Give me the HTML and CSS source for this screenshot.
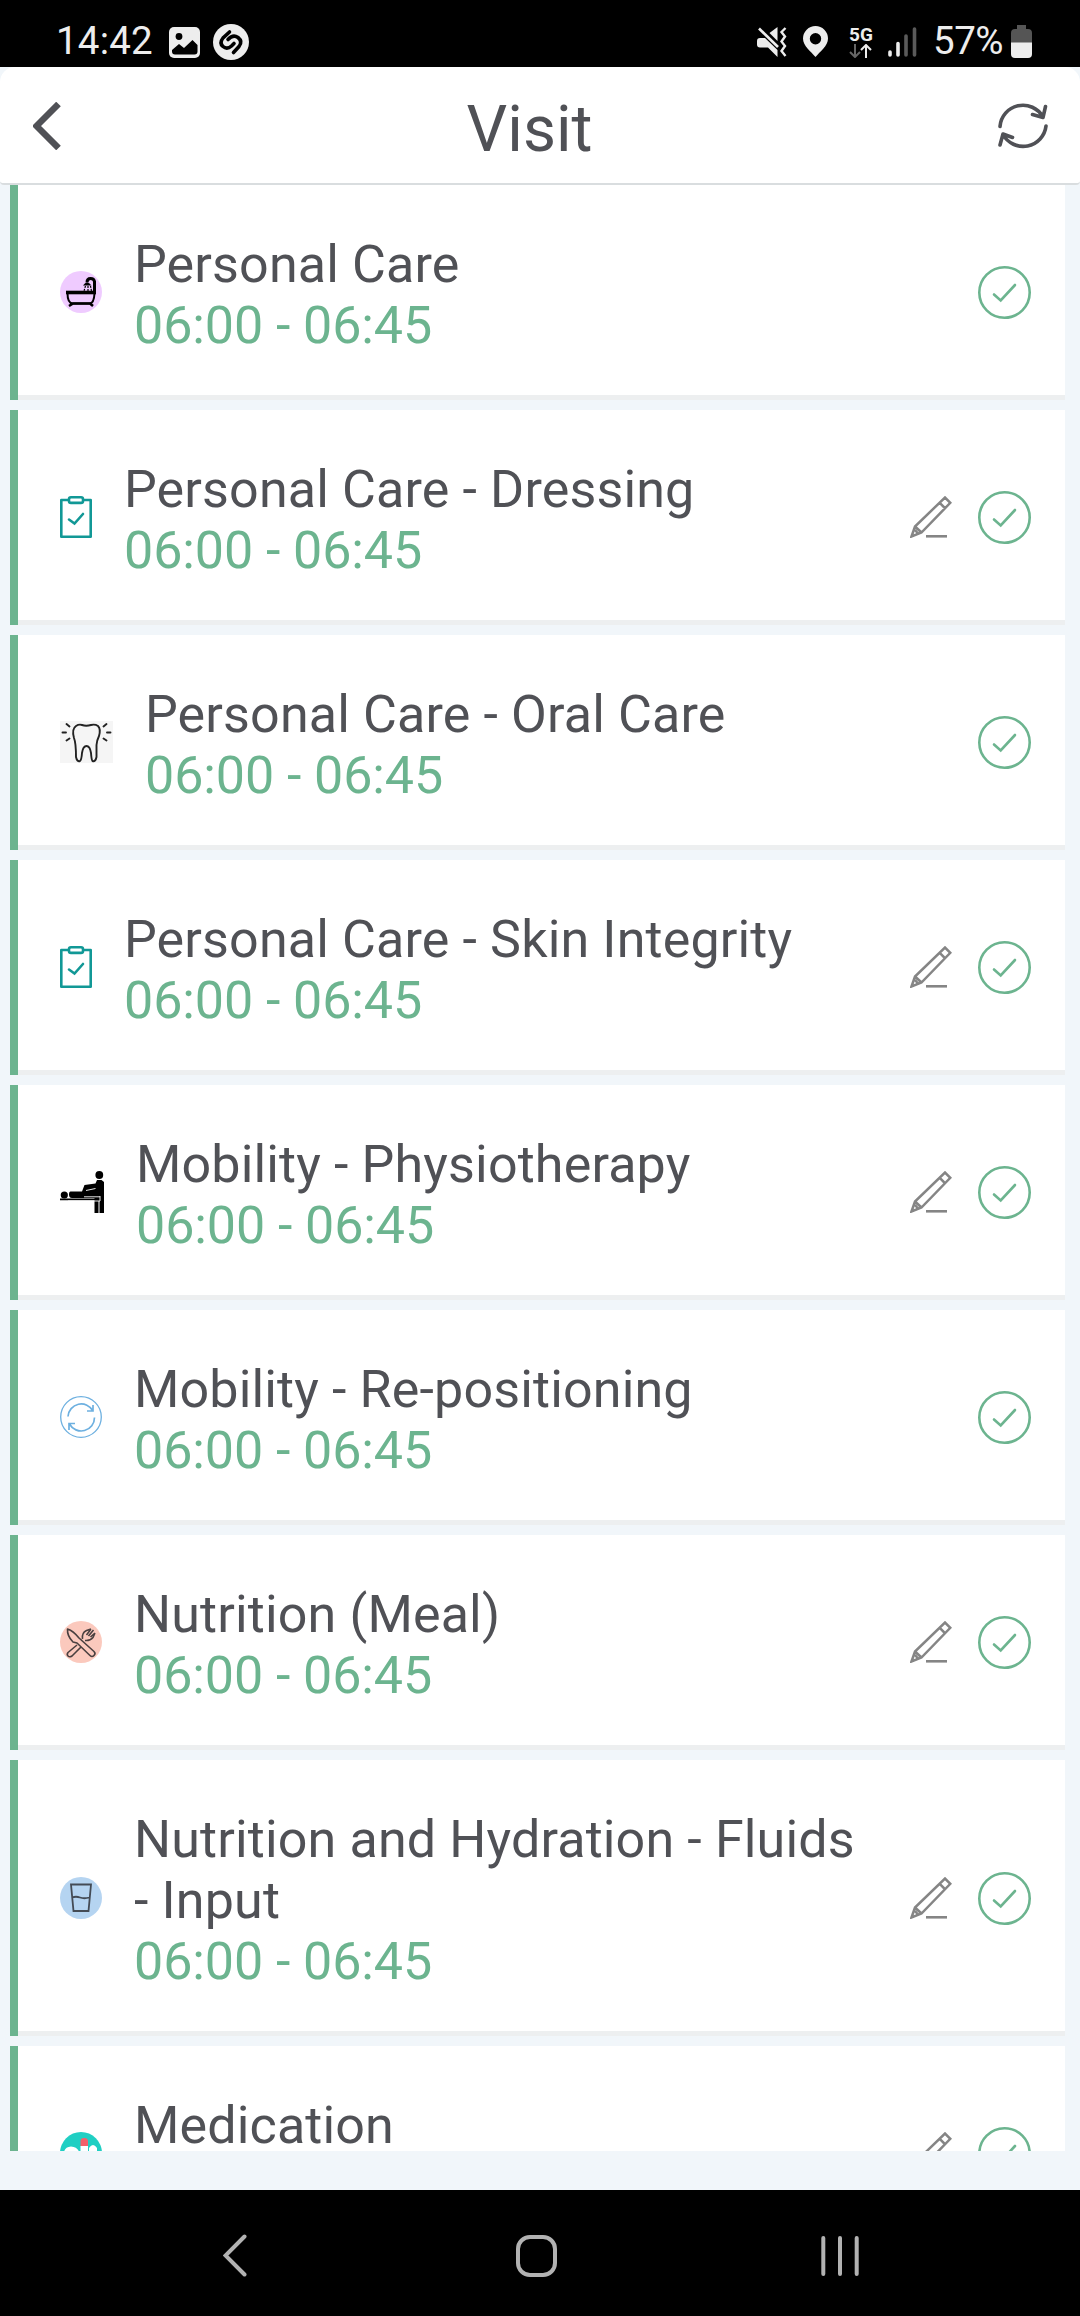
FILE: index.html
```
<!DOCTYPE html>
<html lang="en">
<head>
<meta charset="utf-8">
<title>Visit</title>
<link rel="stylesheet" href="styles.css">
</head>
<body>
<svg class="defs" width="0" height="0">
  <symbol id="done" viewBox="0 0 53 53"><circle cx="26.500" cy="26.500" r="25.200" fill="none" stroke="#6cb48f" stroke-width="2.600"/><path d="M16 28.500l6.700 6L37 19" fill="none" stroke="#6cb48f" stroke-width="2.600" stroke-linecap="round"/></symbol>
  <symbol id="edit" viewBox="0 0 42 42"><g fill="none" stroke="#858585" stroke-width="2.500"><path d="M1.500 40.500L5 30.500 35 1.500l5.300 5.300L11.500 36.500zM5 30.500l6.500 6M29.500 6.700l5.800 5.800M5 34l3 3.500"/><path d="M16 40.300h21" stroke-width="2.600"/></g></symbol>
  <symbol id="clip" viewBox="0 0 32 42"><g fill="none" stroke="#119896" stroke-width="2.600"><path d="M9 4H1.300v36.700h29.400V4H23" stroke-linejoin="round"/><rect x="9" y="1.300" width="14" height="5.600" rx="2"/><path d="M9 23.500l5.500 4L23 18" stroke-linecap="round"/></g></symbol>
</svg>
<header class="status">
  <span class="clock">14:42</span>
  <svg class="s-photo" viewBox="0 0 31 31"><rect width="31" height="31" rx="5" fill="#ededed"/><circle cx="10" cy="9.500" r="3.400"/><path d="M3 23l7-6 5 4 8.500-8 5 5v6.500q0 3-3 3H6q-3 0-3-3z"/></svg>
  <svg class="s-shazam" viewBox="0 0 36 36"><circle cx="18" cy="18" r="18" fill="#ededed"/><path d="M16.500 8l-6.500 6q-4 5 0 8.500 4 3.500 8.500-.5l2.500-2.500M15 15.500q5-5.500 10-2 5 4 1 9l-5.500 6" fill="none" stroke="#000" stroke-width="3.600" stroke-linecap="round"/></svg>
  <span class="grow"></span>
  <svg class="s-mute" viewBox="0 0 30 30"><path d="M0 14q0-3 3-3h5L20.500 23v7L11 20.500H3q-3 0-3-3zM12.500 6L20.500 0v14z" fill="#ededed"/><path d="M2 1.500l19 18.500" stroke="#ededed" stroke-width="2.600"/><path d="M28.500 1l-4 4 3.500 4.500-3.500 5 3.500 4.500-3.500 5 4 5" fill="none" stroke="#ededed" stroke-width="2.400"/></svg>
  <svg class="s-pin" viewBox="0 0 25 31"><path d="M12.500 0a12.500 12.500 0 0 1 12.500 12.500C25 20 17 25.500 12.500 31 8 25.500 0 20 0 12.500A12.500 12.500 0 0 1 12.500 0zm0 7a5.700 5.700 0 1 0 0 11.400 5.700 5.700 0 0 0 0-11.400z" fill="#ededed"/></svg>
  <span class="net"><b>5G</b><svg viewBox="0 0 23 14"><path d="M6 0v12.500M1 8l5 5 5-5" fill="none" stroke="#666" stroke-width="2"/><path d="M17 14V1.500M12 6l5-5 5 5" fill="none" stroke="#ededed" stroke-width="2"/></svg></span>
  <svg class="s-bars" viewBox="0 0 29 30"><g stroke-width="3.600" stroke-linecap="round"><path d="M2 25v3M10 16.500V28" stroke="#ededed"/><path d="M18 9v19M26.500 2v26" stroke="#5a5a5a"/></g></svg>
  <span class="pct">57%</span>
  <svg class="s-batt" viewBox="0 0 21 33"><path d="M6 0h9v4h2q4 0 4 4v10H0V8q0-4 4-4h2z" fill="#555"/><path d="M0 17.500h21V29q0 4-4 4H4q-4 0-4-4z" fill="#ededed"/></svg>
</header>
<div class="app">
<nav class="bar">
  <svg class="back" viewBox="0 0 28 48"><path d="M25.500 2L3.500 24l22 22" fill="none" stroke="#505156" stroke-width="6.500"/></svg>
  <h1>Visit</h1>
  <svg class="sync" viewBox="0 0 50 50"><g fill="none" stroke="#505156" stroke-width="3.600" stroke-linecap="round" stroke-linejoin="round"><path d="M2 25.500A23 23 0 0 1 45 16M34.500 13.500L45 16.500l2.500-11M48 25A23 23 0 0 1 5 33.500M2 44L5 33l9.500 3.500"/></g></svg>
</nav>
<main class="list">
  <article class="task"><svg class="ic round" viewBox="0 0 42 42"><circle cx="21" cy="21" r="21" fill="#efcbff"/><path d="M6 19.700h30v3.600H6z"/><g fill="none" stroke="#000"><path d="M7.500 22q0 10 5 10.500h17q4.500 0 5-10" stroke-width="2"/><path d="M9 35l4-2.500h17l3 2.500" stroke-width="2.600"/><path d="M34.500 21V10.500q-.5-3-4-3-3.500 0-3.500 4" stroke-width="3"/><path d="M25.500 15l-1.500 5M28 15v5M30.500 15l1 5" stroke-width="1.200" stroke-dasharray="2 1"/></g><path d="M23 14.500q4-6 8.500 0z"/></svg><div class="text"><h2>Personal Care</h2><time>06:00 - 06:45</time></div><svg class="ok"><use href="#done"/></svg></article>
  <article class="task"><svg class="ic clip"><use href="#clip"/></svg><div class="text"><h2>Personal Care - Dressing</h2><time>06:00 - 06:45</time></div><svg class="pen"><use href="#edit"/></svg><svg class="ok"><use href="#done"/></svg></article>
  <article class="task"><svg class="ic tooth" viewBox="0 0 53 42"><path d="M0 0h53v42H0z" fill="#f5f5f5"/><g fill="none" stroke="#222" stroke-width="1.900" stroke-linecap="round"><path d="M16 5q3-2 6-1 4 1.500 9 0 4-1 7 1 3 3 1 10-2 4-2.500 9v12q-1 5-4 4-1-1-1.500-8-1-7-4.500-7t-4.500 7q-.5 7-2 8-3 1-4-4 0-14-2-19-2.500-9 2-12z"/><path d="M6.500 3l3 2.500M2.500 11.500h3.500M6.500 19.500l3-2M46.500 3l-3 2.500M50.500 11.500H47M46.500 19.500l-3-2"/></g></svg><div class="text"><h2>Personal Care - Oral Care</h2><time>06:00 - 06:45</time></div><svg class="ok"><use href="#done"/></svg></article>
  <article class="task"><svg class="ic clip"><use href="#clip"/></svg><div class="text"><h2>Personal Care - Skin Integrity</h2><time>06:00 - 06:45</time></div><svg class="pen"><use href="#edit"/></svg><svg class="ok"><use href="#done"/></svg></article>
  <article class="task"><svg class="ic physio" viewBox="0 0 44 42"><circle cx="4.300" cy="24" r="3.600"/><circle cx="39.300" cy="4" r="3.900"/><path d="M10.500 20.500H22l2.500-6.500 11-1.500L37 9h4.500l2.500 2v31h-4.500V30h-1v12h-4V27H12q-3 0-3-3.500 0-3 1.500-3z"/><path d="M0 28.400h40" stroke="#000" stroke-width="1.800"/><path d="M26 19.500l9.500-2M24 25.800h16M40 25v5H8" fill="none" stroke="#fff" stroke-width=".9"/></svg><div class="text"><h2>Mobility - Physiotherapy</h2><time>06:00 - 06:45</time></div><svg class="pen"><use href="#edit"/></svg><svg class="ok"><use href="#done"/></svg></article>
  <article class="task"><svg class="ic round" viewBox="0 0 42 42"><g fill="none" stroke="#6db0e0"><circle cx="21" cy="21" r="20.300" stroke-width="1.300"/><path d="M8 20.500A13.300 13.300 0 0 1 33 15M27 15h6V9M34.500 21.500A13.300 13.300 0 0 1 9.500 28M9 34v-6.500h6" stroke-width="1.700"/></g></svg><div class="text"><h2>Mobility - Re-positioning</h2><time>06:00 - 06:45</time></div><svg class="ok"><use href="#done"/></svg></article>
  <article class="task"><svg class="ic round" viewBox="0 0 42 42"><circle cx="21" cy="21" r="21" fill="#fbc9bd"/><g fill="none" stroke="#4a4040" stroke-width="1.600" stroke-linejoin="round"><path d="M7.500 8q6 2 11.500 9l15 13.500q2 2 0 4t-4 0L17 22l-4-1Q7 15 7.500 8zM17 24L8 31.500q-1.500 2 0 3.500t4 0L21 26M22.500 18q-1-6 4-8.500L31 8M35 12l-2 4.500q-3 3.500-8 3M31 8l-4.500 6M33.500 9l-5 6M35 12l-4.500 4"/></g></svg><div class="text"><h2>Nutrition (Meal)</h2><time>06:00 - 06:45</time></div><svg class="pen"><use href="#edit"/></svg><svg class="ok"><use href="#done"/></svg></article>
  <article class="task"><svg class="ic round" viewBox="0 0 42 42"><circle cx="21" cy="21" r="21" fill="#b5d4f1"/><path d="M11 7.500h20L28.500 34h-15zM12 20.500q4-1.500 8 0t9.500 0" fill="none" stroke="#444b55" stroke-width="1.800"/></svg><div class="text"><h2>Nutrition and Hydration - Fluids - Input</h2><time>06:00 - 06:45</time></div><svg class="pen"><use href="#edit"/></svg><svg class="ok"><use href="#done"/></svg></article>
  <article class="task"><svg class="ic round" viewBox="0 0 42 42"><circle cx="21" cy="21" r="21" fill="#20cfc3"/><path d="M4 20q1-5 7-5.500 6 .5 8 5v15H4zM20.500 14h7.500v20h-7.500zM29 16q4-6 8 0v16h-8z" fill="#fff"/><path d="M20.500 14V9q0-3 3.700-3T28 9v5z" fill="#f4606a"/></svg><div class="text"><h2>Medication</h2><time>06:00 - 06:45</time></div><svg class="pen"><use href="#edit"/></svg><svg class="ok"><use href="#done"/></svg></article>
</main>
</div>
<footer class="keys">
  <svg class="k-back" viewBox="0 0 24 42"><path d="M21.500 2L2.500 21l19 19" fill="none" stroke="#b2b2b2" stroke-width="4" stroke-linecap="round"/></svg>
  <svg class="k-home" viewBox="0 0 41 42"><rect x="2" y="2" width="37" height="38" rx="12" fill="none" stroke="#b2b2b2" stroke-width="4"/></svg>
  <svg class="k-recent" viewBox="0 0 38 40"><path d="M2.300 2v36M19 2v36M35.700 2v36" stroke="#b2b2b2" stroke-width="4" stroke-linecap="round"/></svg>
</footer>
</body>
</html>
```
FILE: styles.css
```
* { box-sizing: border-box; }
body { margin: 0; width: 1080px; height: 2316px; display: flex; flex-direction: column; overflow: hidden; background: #000; font-family: Roboto, "Liberation Sans", sans-serif; }
svg { display: block; flex: none; }
.defs { display: none; }
.status { height: 67px; flex: none; display: flex; align-items: flex-start; padding: 0 48px 0 56px; color: #ededed; font-size: 38.5px; line-height: 46px; }
.clock { margin-top: 18px; width: 113px; letter-spacing: 0.2px; }
.s-photo { width: 31px; height: 31px; margin-top: 27px; }
.s-shazam { width: 36px; height: 36px; margin: 24px 0 0 13px; }
.grow { flex: 1; }
.s-mute { width: 30px; height: 30px; margin: 27px 16px 0 0; }
.s-pin { width: 25px; height: 31px; margin: 26px 21px 0 0; }
.net { width: 25px; margin: 26px 14px 0 0; display: flex; flex-direction: column; font-size: 19px; line-height: 17px; }
.net b { font-weight: 700; }
.net svg { width: 23px; height: 14px; margin-top: 1px; }
.s-bars { width: 29px; height: 30px; margin: 27px 16px 0 0; }
.pct { margin-top: 18px; width: 78px; letter-spacing: -0.5px; }
.s-batt { width: 21px; height: 33px; margin-top: 25px; }
.app { height: 2123px; flex: none; display: flex; flex-direction: column; background: #f1f6fa; }
.bar { height: 118px; flex: none; display: flex; align-items: center; justify-content: space-between; padding: 0 32px 0 33px; background: #fff; border-bottom: 2px solid #d9dddf; border-radius: 15px 15px 4px 4px; color: #505156; }
.back { width: 28px; height: 48px; margin-top: 1px; }
.bar h1 { margin: 9px 0 0; font-size: 64px; line-height: 76px; font-weight: 400; }
.sync { width: 50px; height: 50px; margin-top: 1px; }
.list { height: 1966px; overflow: hidden; padding: 0 15px 0 10px; display: flex; flex-direction: column; gap: 10px; }
.task { flex: none; display: flex; align-items: center; background: #fff; border-left: 8px solid #6cb48f; box-shadow: inset 0 -5px #edeff0; padding: 0 34px 0 42px; }
.round { width: 42px; height: 42px; }
.clip { width: 32px; height: 42px; }
.tooth { width: 53px; height: 42px; }
.physio { width: 44px; height: 42px; }
.ic, .pen { margin-bottom: 1px; }
.text { flex: 1; margin: 0 36px 0 32px; padding: 49px 0 44px; font-size: 52px; line-height: 61px; color: #505156; }
.text h2 { margin: 0; font-size: inherit; font-weight: 400; letter-spacing: 0.15px; }
.text time { display: block; color: #6cb48f; letter-spacing: -0.08px; }
.pen { width: 42px; height: 42px; margin-right: 26px; }
.ok { width: 53px; height: 53px; }
.keys { flex: 1; display: flex; align-items: flex-start; padding: 44px 0 0 223px; }
.k-back { width: 24px; height: 43px; }
.k-home { width: 41px; height: 42px; margin: 1px 0 0 269px; }
.k-recent { width: 38px; height: 40px; margin: 2px 0 0 264px; }
```
